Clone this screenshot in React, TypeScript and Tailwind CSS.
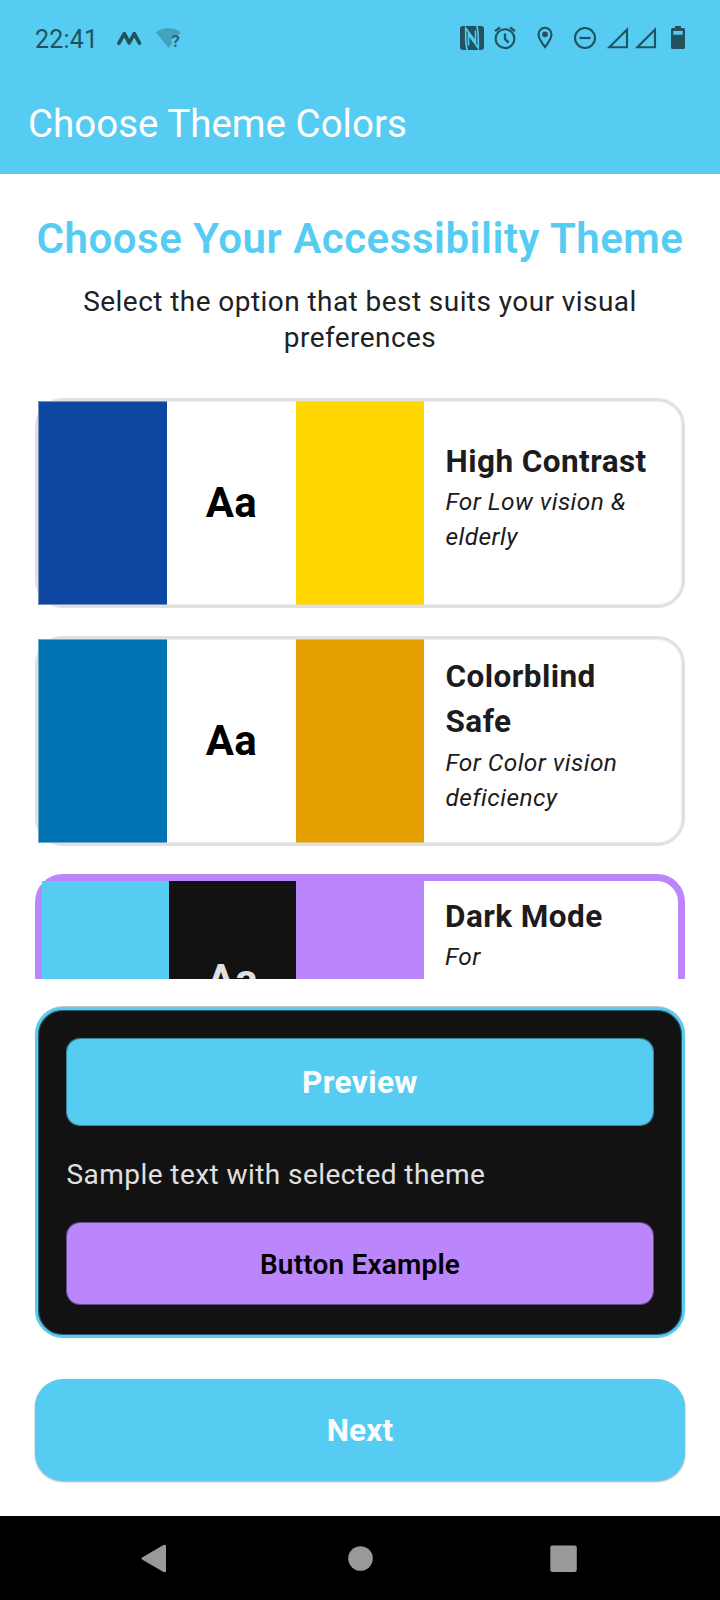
import React from 'react';

type Theme = {
  name: string;
  lines: string[];
  note: string[];
  primary: string;
  middle: string;
  accent: string;
  top: string;
  noteTop: string;
};

const themes: Theme[] = [
  { name: 'High Contrast', lines: ['High Contrast'], note: ['For Low vision &', 'elderly'], primary: 'bg-[#0d47a1]', middle: 'bg-white text-black', accent: 'bg-[#ffd600]', top: 'pt-[38px]', noteTop: '' },
  { name: 'Colorblind Safe', lines: ['Colorblind', 'Safe'], note: ['For Color vision', 'deficiency'], primary: 'bg-[#0072b2]', middle: 'bg-white text-black', accent: 'bg-[#e69f00]', top: 'pt-[15px]', noteTop: 'pt-[1px]' },
];

function ThemeCard({ theme }: { theme: Theme }) {
  return (
    <div className="relative flex h-[210px] shrink-0 rounded-[28px] border-[3px] border-[#e0e0e0] bg-white">
      <div className={`w-[129px] ${theme.primary}`} />
      <div className={`flex w-[129px] items-center justify-center pb-[2px] text-[42px] font-bold tracking-[0.44px] ${theme.middle}`}>Aa</div>
      <div className={`w-[128px] ${theme.accent}`} />
      <div className={`pl-[21.5px] ${theme.top}`}>
        {theme.lines.map((l) => (
          <div key={l} className="text-[31.5px] leading-[45px] font-bold tracking-[0.44px] whitespace-nowrap">{l}</div>
        ))}
        <div className={theme.noteTop}>
          {theme.note.map((l) => (
            <div key={l} className="text-[24.5px] leading-[35px] tracking-[0.4375px] whitespace-nowrap italic">{l}</div>
          ))}
        </div>
      </div>
      <div className="absolute inset-0 rounded-r-[25px] border border-[#e0e0e0]/50" />
    </div>
  );
}

function StatusBar() {
  return (
    <div className="flex h-[76px] items-start text-[#23525f]">
      <span className="mt-[24px] ml-[35px] w-[82px] text-[25px] leading-[32px] tracking-[0.2px]">22:41</span>
      <svg className="h-[76px] w-[603px]" viewBox="117 0 603 76" fill="none" stroke="currentColor">
        <path d="M119 43.200 L124.300 33.600 L129.200 42.800 L134.300 33.600 L139.500 43.200" strokeWidth="3.700" strokeLinecap="round" strokeLinejoin="round" />
        <path d="M156 32.200 Q168 24 181 32.200 L178.500 35 Q171.500 35 171.500 41 L172 44 L168.500 48 Z" fill="currentColor" opacity="0.35" stroke="none" />
        <text x="171.500" y="47" fontSize="16.500" fontWeight="700" fill="currentColor" stroke="none" opacity="0.85">?</text>
        <rect x="460" y="26" width="24" height="24" rx="3" fill="currentColor" stroke="none" />
        <path d="M467.300 50 C465.300 46 465.700 40 465.700 28 L475.500 41.500 V30.500 M476.700 26 C478.700 30 478.300 36 478.300 48 L468.500 34.500 V45.500" stroke="#56ccf2" strokeWidth="1.600" />
        <circle cx="505" cy="38.700" r="9.400" strokeWidth="2.100" />
        <path d="M505 33.500 V39 L508.600 42.600 M495 31.200 L500 27.300 M515 31.200 L510 27.300" strokeWidth="2.300" />
        <path d="M545 47 C541 42 538.500 38 538.500 34.300 A6.500 6.500 0 0 1 551.500 34.300 C551.500 38 549 42 545 47 Z" strokeWidth="2.100" />
        <circle cx="545" cy="34.300" r="2.900" fill="currentColor" stroke="none" />
        <circle cx="585" cy="38" r="10" strokeWidth="2.100" />
        <path d="M579.500 38 H590.500" strokeWidth="2.200" />
        <path d="M609.300 47.300 H627 V29.500 Z" strokeWidth="2.100" />
        <path d="M637.300 47.300 H655 V29.500 Z" strokeWidth="2.100" />
        <path d="M675 26 h6 v2 h2.500 a1.500 1.500 0 0 1 1.500 1.500 V47.500 a1.500 1.500 0 0 1 -1.500 1.500 H672.500 a1.500 1.500 0 0 1 -1.500 -1.500 V29.500 a1.500 1.500 0 0 1 1.500 -1.500 H675 Z M673.300 31 V34.800 H682.700 V31 Z" fill="currentColor" fillRule="evenodd" stroke="none" />
      </svg>
    </div>
  );
}

export default function App() {
  return (
    <div className="flex h-[1600px] w-[720px] flex-col overflow-hidden bg-white font-[Roboto,sans-serif] text-[#1d1b20]">
      <header className="h-[174px] shrink-0 bg-[#56ccf2]">
        <StatusBar />
        <h1 className="mt-[24px] ml-[28px] text-[38.5px] leading-[48px] whitespace-nowrap text-white">Choose Theme Colors</h1>
      </header>

      <main className="flex h-[1342px] shrink-0 flex-col px-[35px]">
        <h2 className="mt-[35px] text-center text-[42px] leading-[60px] font-semibold tracking-[0.53px] whitespace-nowrap text-[#56ccf2]">Choose Your Accessibility Theme</h2>
        <p className="mt-[15px] text-center text-[28px] leading-[36px] tracking-[0.4375px] text-[#212121]">Select the option that best suits your visual<br />preferences</p>

        <div className="mt-[42px] flex h-[581px] shrink-0 flex-col gap-7 overflow-hidden">
          {themes.map((t) => <ThemeCard key={t.name} theme={t} />)}
          <div className="flex h-[210px] shrink-0 rounded-[28px] border-[7px] border-[#bb86fc] bg-white">
            <div className="w-[127px] bg-[#56ccf2]" />
            <div className="flex w-[127px] items-center justify-center bg-[#121212] text-[42px] font-bold tracking-[0.44px] text-[#e0e0e0]">Aa</div>
            <div className="w-[128px] bg-[#bb86fc]" />
            <div className="pt-[13px] pl-[21px]">
              <div className="text-[31.5px] leading-[45px] font-bold tracking-[0.44px] whitespace-nowrap">Dark Mode</div>
              <div className="text-[24.5px] leading-[35px] tracking-[0.4375px] italic">For</div>
            </div>
          </div>
        </div>

        <section className="mt-[28px] flex h-[331px] shrink-0 flex-col rounded-[28px] border-[3px] border-[#56ccf2] bg-[#121212] px-[28px] pt-[28px] shadow-[inset_0_0_0_1px_rgba(86,204,242,0.4),0_-1px_0_rgba(35,82,95,0.3)]">
          <div className="flex h-[88px] items-center justify-center rounded-[14px] border border-[#56ccf2]/60 bg-[#56ccf2] bg-clip-padding pt-[2px] text-[31.5px] font-bold tracking-[0.44px] text-white">Preview</div>
          <p className="mt-[29px] pl-[0.5px] text-[28px] leading-[40px] tracking-[0.4375px] text-[#e0e0e0]">Sample text with selected theme</p>
          <div className="mt-[27px] flex h-[83px] items-center justify-center rounded-[14px] border border-[#bb86fc]/50 bg-[#bb86fc] bg-clip-padding pt-[2px] text-[28px] font-semibold tracking-[0.175px] text-black">Button Example</div>
        </section>

        <button className="mt-[41px] h-[102px] shrink-0 rounded-[28px] bg-[#56ccf2] pt-[2px] text-[31.5px] font-bold tracking-[0.175px] text-white shadow-[0_1px_2px_rgba(0,0,0,0.35)]">Next</button>
      </main>

      <nav className="h-[84px] shrink-0 bg-black">
        <svg width="720" height="84" viewBox="0 0 720 84" fill="#999999">
          <path d="M142.500 41.300 L163.500 29 Q166 27.800 166 30.500 V54.500 Q166 57.200 163.500 56 L142.500 43.700 Q140.500 42.500 142.500 41.300 Z" />
          <circle cx="360.500" cy="42.500" r="12.300" />
          <rect x="550.300" y="29.500" width="26.500" height="26.500" rx="2" />
        </svg>
      </nav>
    </div>
  );
}
